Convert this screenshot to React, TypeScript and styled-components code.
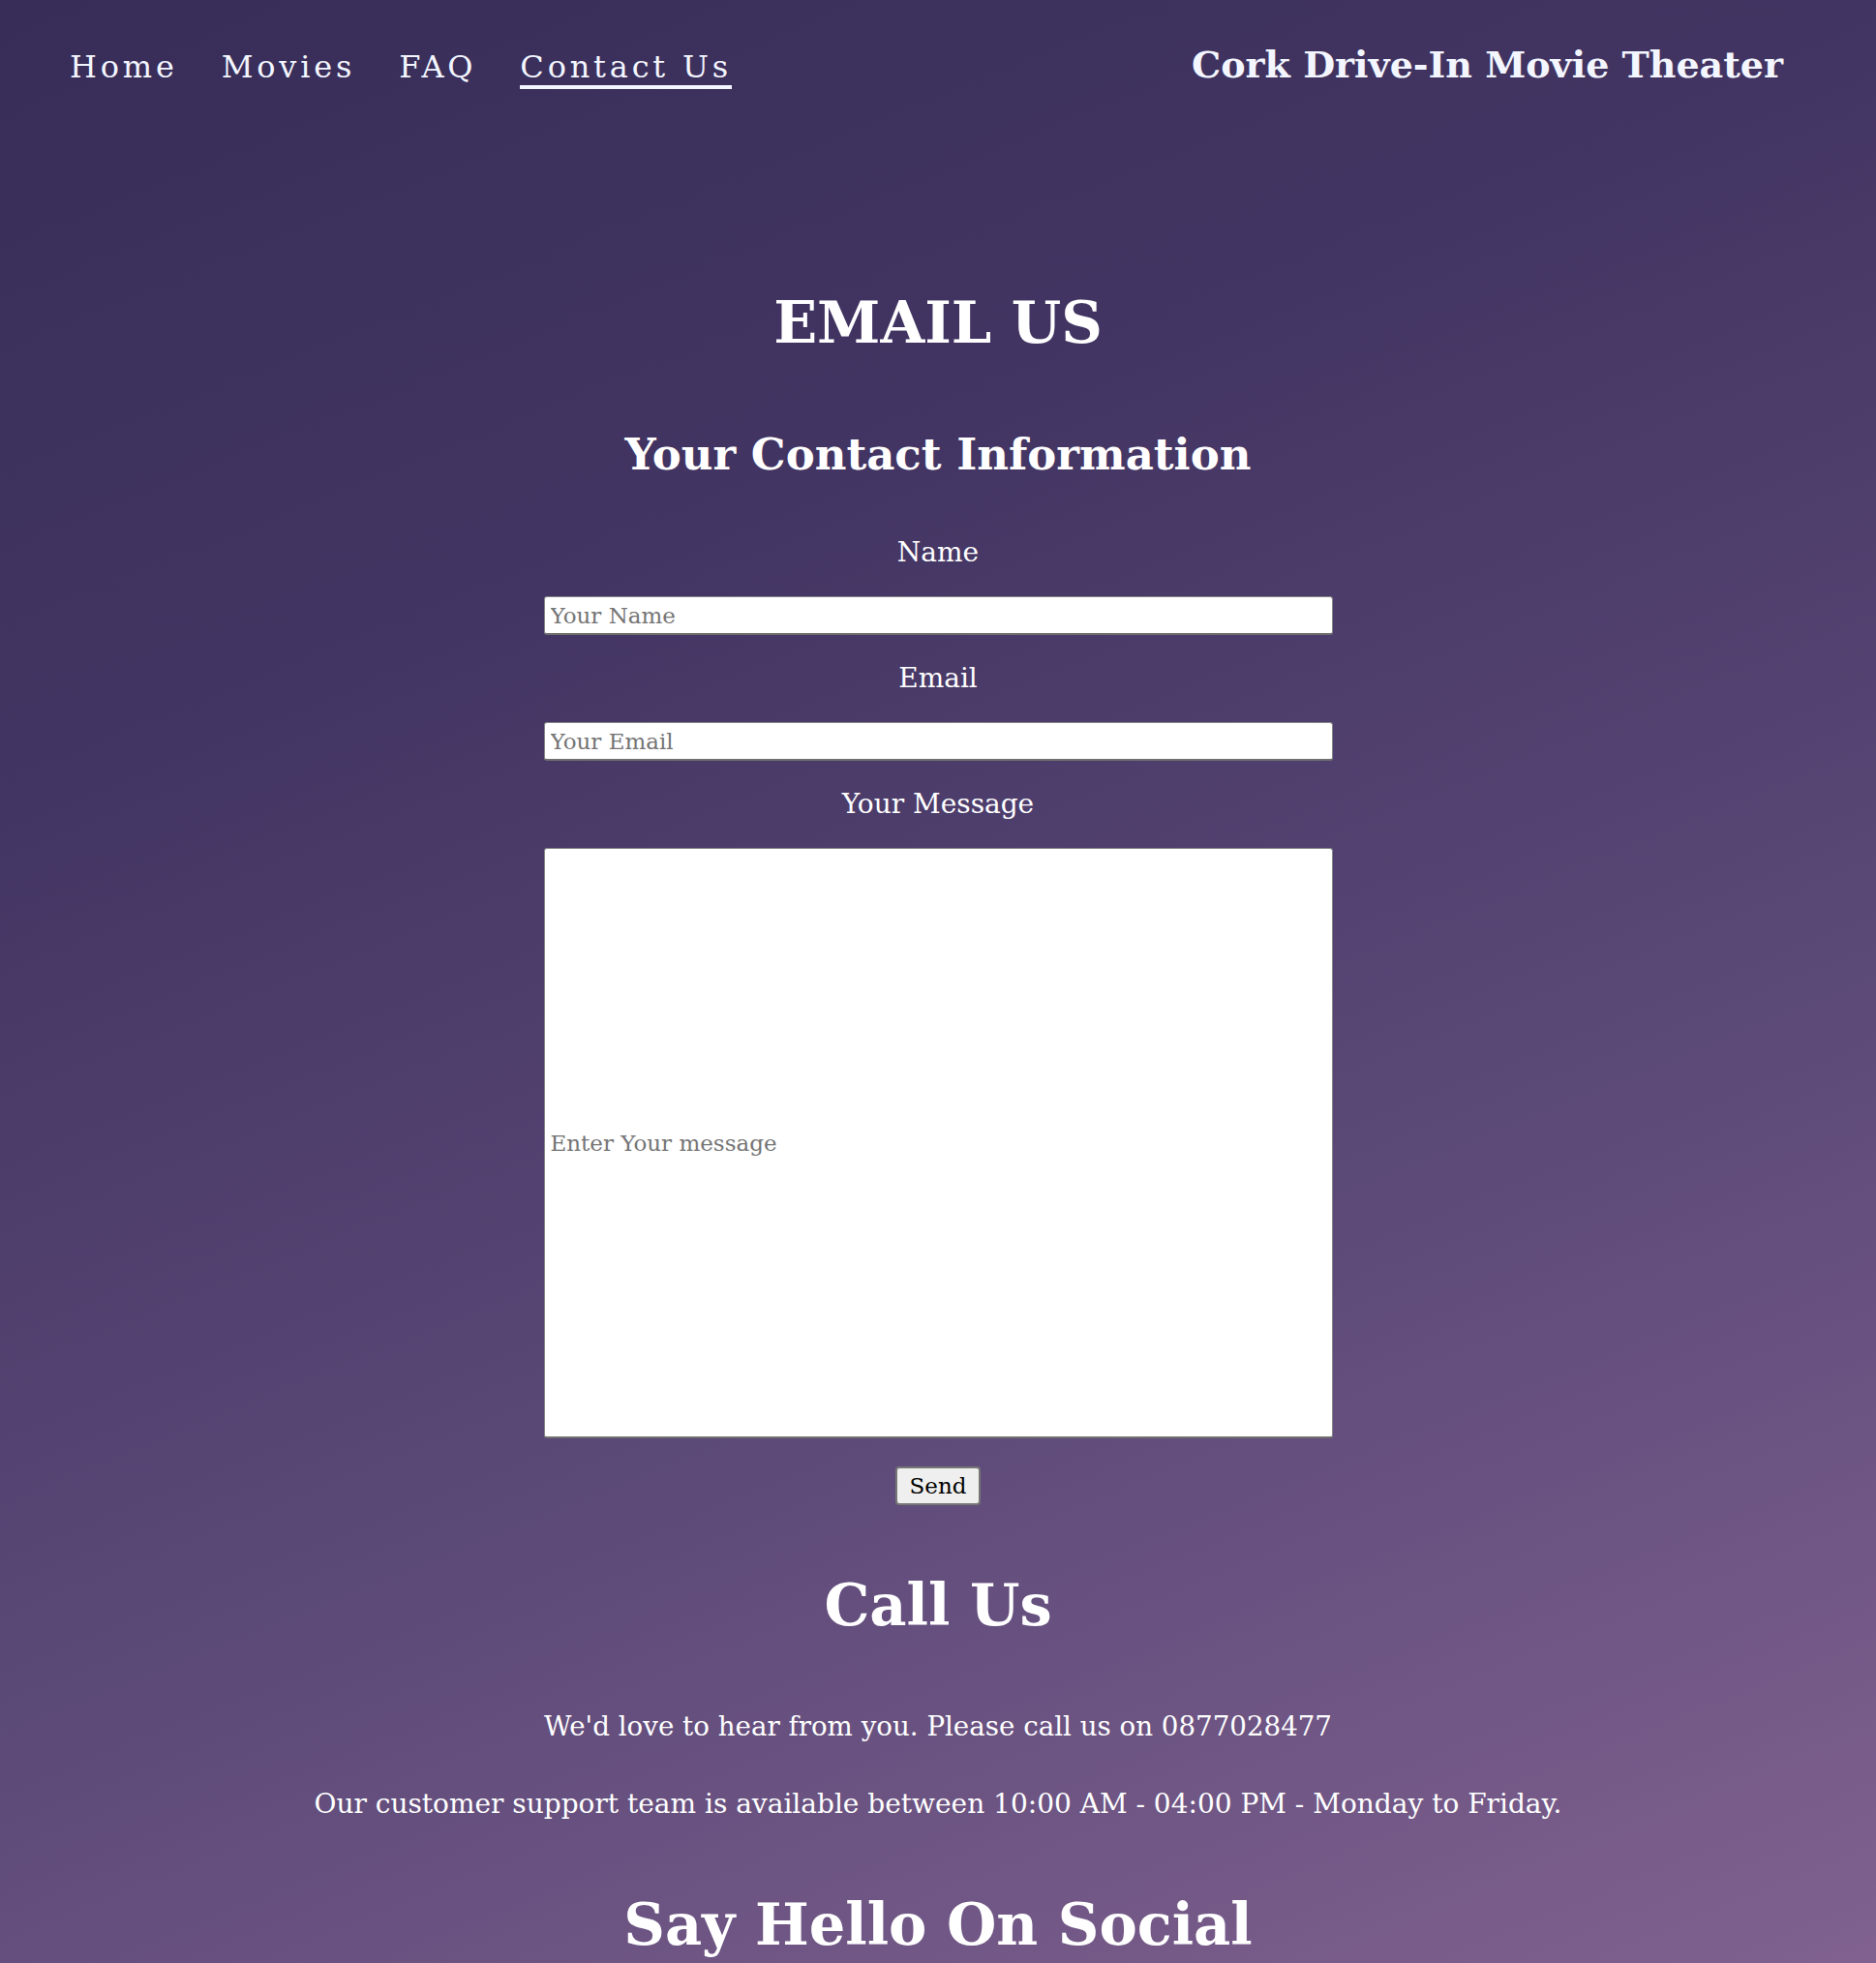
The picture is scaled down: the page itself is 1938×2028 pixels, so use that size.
import React from "react";
import styled, { createGlobalStyle } from "styled-components";

const GlobalStyle = createGlobalStyle`
  html, body {
    margin: 0;
    padding: 0;
  }
  body {
    font-family: "DejaVu Serif", "Liberation Serif", serif;
    background: linear-gradient(158deg, #372d58 0%, #433563 30%, #5a4877 62%, #80618f 100%);
    min-height: 2028px;
    color: #ffffff;
  }
`;

const Page = styled.div`
  min-height: 2028px;
  display: flex;
  flex-direction: column;
`;

const Header = styled.header`
  display: flex;
  justify-content: space-between;
  align-items: baseline;
  padding: 44px 96px 0 72px;
`;

const Nav = styled.nav`
  display: flex;
  align-items: baseline;
  gap: 45px;
`;

const NavLink = styled.a<{ $active?: boolean }>`
  display: inline-block;
  font-size: 32px;
  line-height: 38px;
  letter-spacing: 3.8px;
  color: #f3f6ff;
  text-decoration: none;
  border-bottom: 4px solid ${(p) => (p.$active ? "#f3f6ff" : "transparent")};
  cursor: pointer;
`;

const SiteTitle = styled.div`
  font-size: 38px;
  line-height: 46px;
  font-weight: bold;
  color: #f3f6ff;
`;

const Main = styled.main`
  display: flex;
  flex-direction: column;
  align-items: center;
  padding-top: 207px;
`;

const BigHeading = styled.h1<{ $gap?: number }>`
  margin: ${(p) => p.$gap ?? 0}px 0 0;
  font-size: 59px;
  line-height: 70px;
  font-weight: bold;
  text-align: center;
`;

const SubHeading = styled.h2`
  margin: 74px 0 0;
  font-size: 45px;
  line-height: 54px;
  font-weight: bold;
  text-align: center;
`;

const Form = styled.form`
  display: flex;
  flex-direction: column;
  align-items: center;
  width: 815px;
  margin-top: 57px;
`;

const Label = styled.label<{ $first?: boolean }>`
  font-size: 28px;
  line-height: 34px;
  margin-top: ${(p) => (p.$first ? 0 : 28)}px;
  margin-bottom: 28px;
`;

const Field = styled.input<{ $tall?: boolean }>`
  box-sizing: border-box;
  width: 100%;
  height: ${(p) => (p.$tall ? 610 : 40)}px;
  font-family: "DejaVu Serif", "Liberation Serif", serif;
  font-size: 23px;
  padding: 0 6px;
  background: #ffffff;
  color: #222;
  border: 1px solid #858585;
  border-bottom: 2px solid #6f6f6f;
  border-radius: 3px;
  outline: none;
  &::placeholder {
    color: #757575;
  }
`;

const SendButton = styled.button`
  margin-top: 29px;
  box-sizing: border-box;
  width: 88px;
  height: 40px;
  padding: 0;
  font-family: "DejaVu Serif", "Liberation Serif", serif;
  font-size: 23px;
  color: #000;
  background: #efefef;
  border: 2px solid #767676;
  border-radius: 4px;
  cursor: pointer;
`;

const Paragraph = styled.p<{ $gap: number }>`
  margin: ${(p) => p.$gap}px 0 0;
  font-size: ${(p) => (p.$gap > 60 ? 27.7 : 28)}px;
  line-height: 34px;
  text-align: center;
`;

export default function App() {
  return (
    <>
      <GlobalStyle />
      <Page>
        <Header>
          <Nav>
            <NavLink>Home</NavLink>
            <NavLink>Movies</NavLink>
            <NavLink>FAQ</NavLink>
            <NavLink $active>Contact Us</NavLink>
          </Nav>
          <SiteTitle>Cork Drive-In Movie Theater</SiteTitle>
        </Header>
        <Main>
          <BigHeading>EMAIL US</BigHeading>
          <SubHeading>Your Contact Information</SubHeading>
          <Form onSubmit={(e) => e.preventDefault()}>
            <Label $first htmlFor="name">Name</Label>
            <Field id="name" type="text" placeholder="Your Name" />
            <Label htmlFor="email">Email</Label>
            <Field id="email" type="email" placeholder="Your Email" />
            <Label htmlFor="message">Your Message</Label>
            <Field id="message" type="text" $tall placeholder="Enter Your message" />
            <SendButton type="submit">Send</SendButton>
          </Form>
          <BigHeading $gap={69}>Call Us</BigHeading>
          <Paragraph $gap={73}>We'd love to hear from you. Please call us on 0877028477</Paragraph>
          <Paragraph $gap={46}>
            Our customer support team is available between 10:00 AM - 04:00 PM - Monday to Friday.
          </Paragraph>
          <BigHeading $gap={73}>Say Hello On Social</BigHeading>
        </Main>
      </Page>
    </>
  );
}
